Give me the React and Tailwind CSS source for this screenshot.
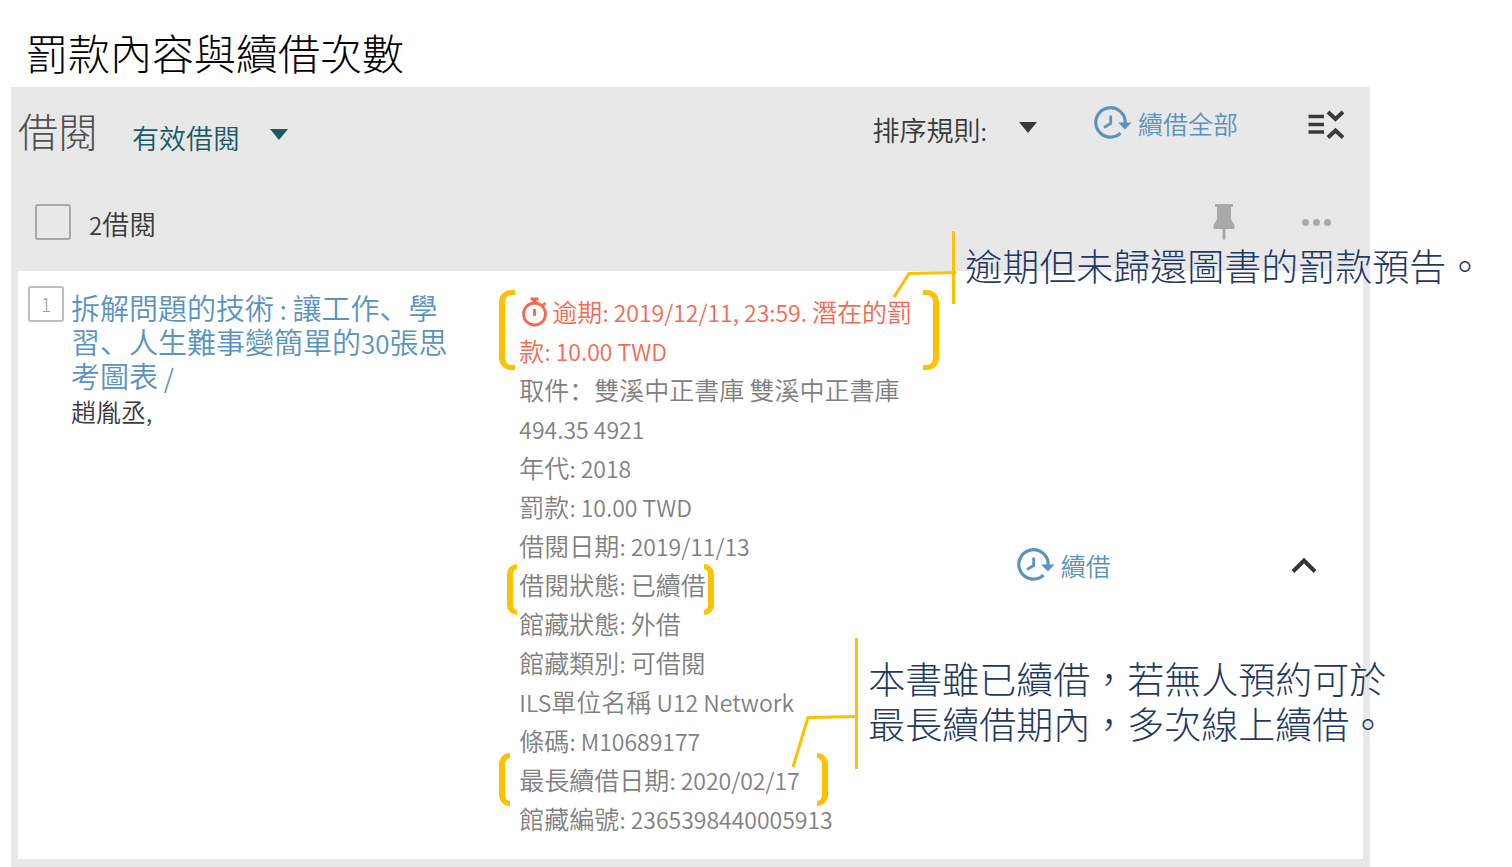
const loan = {
  title: "拆解問題的技術 : 讓工作、學習、人生難事變簡單的30張思考圖表 /",
  author: "趙胤丞,",
  overdue: "逾期: 2019/12/11, 23:59. 潛在的罰款: 10.00 TWD",
};

const details = [
  { text: "取件：雙溪中正書庫 雙溪中正書庫" },
  { text: "494.35 4921" },
  { text: "年代: 2018" },
  { text: "罰款: 10.00 TWD" },
  { text: "借閱日期: 2019/11/13" },
  { text: "借閱狀態: 已續借", mark: "status" },
  { text: "館藏狀態: 外借" },
  { text: "館藏類別: 可借閱" },
  { text: "ILS單位名稱 U12 Network" },
  { text: "條碼: M10689177" },
  { text: "最長續借日期: 2020/02/17", mark: "renewal" },
  { text: "館藏編號: 2365398440005913" },
];

// Latin runs are set a little smaller than the Chinese around them
function Mixed({ children, latin = "text-[23px]" }) {
  return children.split(/([\x20-\x7e]+)/).map((part, i) =>
    i % 2 ? <span key={i} className={`leading-none ${latin}`}>{part}</span> : part
  );
}

function RenewIcon() {
  return (
    <svg width="38" height="34" viewBox="0 0 38 34" fill="none" stroke="currentColor" strokeWidth="3.2" aria-hidden="true">
      <path d="M26.5 27.2A14.7 14.7 0 1 1 31.2 17" />
      <path d="M16.7 9.5v8L10 21.5" strokeWidth="2.8" />
      <path d="M24 16.5H37.5L31 23.5Z" fill="currentColor" stroke="none" />
    </svg>
  );
}

function Triangle({ className }) {
  return (
    <svg width="18" height="11" viewBox="0 0 18 11" className={className} aria-hidden="true">
      <path d="M0 0H18L9 11Z" fill="currentColor" />
    </svg>
  );
}

function CollapseIcon() {
  return (
    <svg width="36" height="30" viewBox="0 0 36 30" fill="none" stroke="currentColor" strokeWidth="3.6" aria-hidden="true">
      <path d="M0.5 6.5H16M0.5 14.5H16M0.5 22H16" />
      <path d="M20 2l7.5 7L35 2M20 27.5l7.5-7 7.5 7" strokeWidth="4" />
    </svg>
  );
}

function PinIcon() {
  return (
    <svg width="22" height="36" viewBox="0 0 22 36" fill="currentColor" aria-hidden="true">
      <path d="M2 0H20V3H18V15C18 17 21 19 21.5 21V25H12.5V35.5H9.5V25H0.5V21C1 19 4 17 4 15V3H2Z" />
    </svg>
  );
}

function StopwatchIcon() {
  return (
    <svg width="26" height="30" viewBox="0 0 26 30" fill="none" stroke="currentColor" strokeWidth="2.8" className="mr-1 ml-[3px] inline-block align-[-5px]" aria-hidden="true">
      <circle cx="12.5" cy="17" r="11" />
      <path d="M8.5 2H16.5M12.5 12v7M20.5 8.5l3-2.5" />
      <path d="M12.5 3v4" strokeWidth="4" />
    </svg>
  );
}

function Brackets({ className, size }) {
  return (
    <span className={`pointer-events-none absolute flex justify-between ${className}`}>
      <span className={`rounded-l-[12px] border-y-[5px] border-l-[6px] border-[#ffc000] ${size}`} />
      <span className={`rounded-r-[12px] border-y-[5px] border-r-[6px] border-[#ffc000] ${size}`} />
    </span>
  );
}

function Note({ className, children }) {
  return (
    <p className={`absolute border-l-[3px] border-[#ffc000] pl-[10px] font-['Noto_Sans_CJK_TC',sans-serif] text-[37px] leading-[45px] font-light whitespace-nowrap text-[#1f3864] ${className}`}>
      {children}
    </p>
  );
}

export default function App() {
  return (
    <main className="min-h-screen bg-white font-['Noto_Sans_CJK_SC',sans-serif] font-[350]">
      <h1 className="h-[87px] pt-5 pl-[26px] font-['Noto_Sans_CJK_TC',sans-serif] text-[42px] leading-[64px] font-light text-black">
        罰款內容與續借次數
      </h1>

      <section className="mr-[142px] ml-[11px] bg-[#e8e8e8] px-[7px] pb-2 text-[#3a3a3a]">
        <header className="flex h-[86px] items-center pr-[19px]">
          <h2 className="text-[40px] leading-[60px] font-light text-[#505050]">借閱</h2>
          <div className="relative mt-4 ml-[34px] text-[#1a5b66]">
            <select aria-label="借閱類型" className="w-[156px] appearance-none bg-transparent text-[27px] leading-10 outline-none">
              <option>有效借閱</option>
            </select>
            <Triangle className="pointer-events-none absolute top-[11px] right-0" />
          </div>
          <div className="relative mr-[57px] ml-auto flex items-center">
            <label htmlFor="sort" className="text-[27px] leading-10">
              <Mixed latin="text-[24px]">排序規則:</Mixed>
            </label>
            <select id="sort" className="w-[50px] appearance-none bg-transparent outline-none" />
            <Triangle className="pointer-events-none absolute top-3 right-0" />
          </div>
          <button type="button" className="mb-3.5 flex items-center gap-[6px] text-[25px] leading-10 text-[#5a93bf]">
            <RenewIcon />
            續借全部
          </button>
          <button type="button" aria-label="全部收合" className="mb-2.5 ml-[70px]">
            <CollapseIcon />
          </button>
        </header>

        <div className="flex h-[98px] items-center pr-8 pl-[17px]">
          <label className="flex items-center gap-[18px] text-[27px] leading-10">
            <input type="checkbox" className="size-9 appearance-none rounded-[3px] border-2 border-[#a9a9a9]" />
            <span className="mt-1"><Mixed latin="text-[24px]">2借閱</Mixed></span>
          </label>
          <button type="button" aria-label="釘選" className="ml-auto text-[#a9a9a9]">
            <PinIcon />
          </button>
          <button type="button" aria-label="更多" className="ml-[67px] flex gap-1">
            <span className="size-[7px] rounded-full bg-[#a9a9a9]" />
            <span className="size-[7px] rounded-full bg-[#a9a9a9]" />
            <span className="size-[7px] rounded-full bg-[#a9a9a9]" />
          </button>
        </div>

        <article className="grid grid-cols-[501fr_497fr_346fr] bg-white pt-[21px] pb-[21px]">
          <div className="-mt-1.5 flex items-start gap-[7px] pr-[68px] pl-[10px]">
            <span className="flex size-9 shrink-0 items-center justify-center rounded-[3px] border-2 border-[#bdbdbd] text-[19px] font-light text-[#a0a0a0]">
              1
            </span>
            <div className="pt-1">
              <h3 className="text-[29px] leading-[34px] font-[350] text-[#5a93bf]">
                <a href="#loan"><Mixed latin="text-[26px]">{loan.title}</Mixed></a>
              </h3>
              <p className="text-[25px] leading-[39px]"><Mixed>{loan.author}</Mixed></p>
            </div>
          </div>

          <ul className="mr-[98px] text-[25px] leading-[39px] text-[#808080]">
            <li className="relative text-[#f4694f]">
              <StopwatchIcon />
              <Mixed>{loan.overdue}</Mixed>
              <Brackets className="-top-0.5 -right-5 bottom-0 -left-5" size="w-4" />
              <svg width="64" height="28" viewBox="0 0 64 28" fill="none" stroke="#ffc000" strokeWidth="3" className="absolute top-[-21px] left-[373px]" aria-hidden="true">
                <path d="M2 26L17 2.5L64 1.5" />
              </svg>
              <Note className="top-[-61px] left-[433px] pt-3 pb-4">逾期但未歸還圖書的罰款預告。</Note>
            </li>
            {details.map(({ text, mark }) => (
              <li key={text} className="relative w-fit">
                <Mixed>{text}</Mixed>
                {mark === "status" && <Brackets className="top-[-1px] -right-2 bottom-[-11px] -left-3" size="w-[10px]" />}
                {mark === "renewal" && (
                  <>
                    <Brackets className="inset-y-[-7px] -right-[28px] -left-5" size="w-[11px]" />
                    <svg width="66" height="54" viewBox="0 0 66 54" fill="none" stroke="#ffc000" strokeWidth="3" className="absolute top-[-45px] left-[272px]" aria-hidden="true">
                      <path d="M2 52L17 2.5L66 1.5" />
                    </svg>
                    <Note className="top-[-122px] left-[336px] pt-[18px] pb-[23px]">
                      本書雖已續借，若無人預約可於
                      <br />
                      最長續借期內，多次線上續借。
                    </Note>
                  </>
                )}
              </li>
            ))}
          </ul>

          <div className="flex items-center justify-between self-center pr-[46px]">
            <button type="button" className="flex items-center gap-[6px] text-[25px] leading-10 text-[#5a93bf]">
              <RenewIcon />
              續借
            </button>
            <button type="button" aria-label="收合">
              <svg width="26" height="18" viewBox="0 0 26 18" fill="none" stroke="#333" strokeWidth="4" aria-hidden="true">
                <path d="M2 15.5L13 4.5L24 15.5" />
              </svg>
            </button>
          </div>
        </article>
      </section>
    </main>
  );
}
